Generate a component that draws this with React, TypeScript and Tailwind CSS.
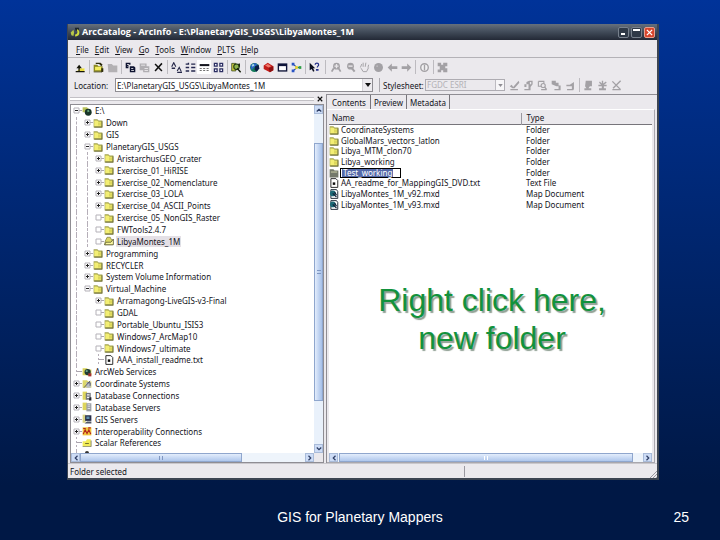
import type { ReactNode } from 'react';

type IconName =
  | 'up' | 'connect' | 'disconnect' | 'copy' | 'paste' | 'delete'
  | 'large' | 'list' | 'details' | 'thumbs' | 'search'
  | 'globe' | 'toolbox' | 'window' | 'model' | 'help'
  | 'zoomIn' | 'zoomOut' | 'pan' | 'full' | 'back' | 'forward' | 'info' | 'grid'
  | 'edit' | 'props' | 'find' | 'import' | 'export' | 'pageDown' | 'spark' | 'cross'
  | 'folder' | 'folderOpen' | 'folderDim' | 'drive' | 'text' | 'map'
  | 'web' | 'coord' | 'db' | 'server' | 'gis' | 'interop' | 'scalar';

const G = '#a3a1a5';

// all drawn on a 16 unit grid
const ICONS: Record<IconName, ReactNode> = {
  up: (
    <>
      <path d="M1 14h13V9H8z" fill="#f2e96b" />
      <path d="M1 13h13v2H1zM5 7h2v6H5zM2 9l4-5 4 5z" fill="#15150a" />
      <path d="M7 10h6v3H7z" fill="#e9dd3d" />
    </>
  ),
  connect: (
    <>
      <path d="M1 4h5l2 2h6v8H1z" fill="#8d8a22" />
      <path d="M3 7h9v5H3z" fill="#f4ee60" />
      <path d="M4 1h7l3 3-2 2-3-3H4zM12 9h3v5l-3 1z" fill="#2d2c0c" />
      <path d="M1 14h12v1H1z" fill="#2d2c0c" />
    </>
  ),
  disconnect: <path d="M1 3h6l2 2h6v10H2z" fill="#b3b1b4" />,
  copy: (
    <>
      <path d="M1 1h7v3H5v5H1zM7 6h6l2 2v7H7z" fill="#0d1230" />
      <path d="M3 3h3v1H3zM3 6h1v1H3zM9 9h3v1H9zM9 12h4v1H9z" fill="#fff" />
    </>
  ),
  paste: (
    <>
      <path d="M1 2h10v4h4v9H6v-3H1z" fill="#b0aeb2" />
      <path d="M3 4h6v1H3zM8 9h5v1H8zM8 12h5v1H8z" fill="#f6f5f7" />
    </>
  ),
  delete: <path d="M3 3l10 10M13 2L3 13" stroke="#111" strokeWidth="2.2" fill="none" />,
  large: (
    <>
      <path d="M1 7l3-6 3 6M9 13l3-5 3 6" stroke="#26284a" strokeWidth="1.6" fill="none" />
      <path d="M1 8h5v2H1zM9 14h7v2H9z" fill="#26284a" />
    </>
  ),
  list: <path d="M1 2h5v2H1zM9 2h6v2H9zM1 7h5v2H1zM9 7h6v2H9zM1 12h5v2H1zM9 12h6v2H9zM4 1h2v2H4z" fill="#24274e" />,
  details: (
    <>
      <path d="M1 3h14v3H1z" fill="#15161f" />
      <path d="M1 9h3v1H1zM6 9h3v1H6zM11 9h3v1h-3zM1 12h3v1H1zM6 12h3v1H6zM11 12h3v1h-3z" fill="#444" />
    </>
  ),
  thumbs: <path d="M2 2h4v4H2zM10 2h4v4h-4zM2 10h4v4H2zM10 10h4v4h-4z" fill="#f4f4ff" stroke="#2b2e62" strokeWidth="1.8" />,
  search: (
    <>
      <path d="M1 2h6v11H1z" fill="#c9c83f" stroke="#24380f" />
      <circle cx="8" cy="7" r="4" fill="#8fb44c" stroke="#1d3311" strokeWidth="1.5" />
      <path d="M9 9l5 6M12 2v5" stroke="#16200d" strokeWidth="2" />
    </>
  ),
  globe: (
    <>
      <circle cx="8" cy="8" r="6.5" fill="#147a5a" />
      <path d="M2 6c3-5 8-5 10-2L7 8l-3 4z" fill="#2d65c8" />
      <path d="M9 6l5-2 1 5-4 5-3-3z" fill="#0c1b45" />
      <path d="M4 4l3-1 1 2-3 2z" fill="#a9e0e2" />
    </>
  ),
  toolbox: (
    <>
      <path d="M1 5l6-4 8 5v6l-5 3-9-5z" fill="#c31d1a" />
      <path d="M3 5l4-2 5 3-4 2z" fill="#f0796c" />
      <path d="M8 9l7-3v6l-5 3z" fill="#8c1012" />
    </>
  ),
  window: (
    <>
      <path d="M1 2h14v12H1z" fill="#10153a" />
      <path d="M3 6h10v6H3z" fill="#fff" />
    </>
  ),
  model: (
    <>
      <path d="M3 3l6 5-6 5M9 8h5" stroke="#274a9c" strokeWidth="1.5" fill="none" />
      <path d="M1 1h4v4H1zM1 11h4v4H1z" fill="#2a54c4" />
      <path d="M6 6h4v4H6z" fill="#e8d72b" />
      <path d="M11 6h4v4h-4z" fill="#2c9c45" />
    </>
  ),
  help: (
    <>
      <path d="M1 1l8 8H6l2 4-2 1-2-4-3 2z" fill="#0d0f20" />
      <path d="M9 4c0-3 5-3 5 0 0 2-2 2-2 4M11 11h2v1h-2z" stroke="#25308a" strokeWidth="1.8" fill="none" />
    </>
  ),
  zoomIn: (
    <>
      <circle cx="8" cy="6" r="5" fill={G} />
      <path d="M7 3h2v2h2v2H9v2H7V7H5V5h2z" fill="#e9e7ea" />
      <path d="M4 9l-3 5M11 9l3 5" stroke={G} strokeWidth="2.5" />
    </>
  ),
  zoomOut: (
    <>
      <circle cx="8" cy="6" r="5" fill={G} />
      <path d="M5 5h6v2H5z" fill="#e9e7ea" />
      <path d="M10 9l4 5" stroke={G} strokeWidth="3" />
    </>
  ),
  pan: <path d="M2 8l2-5M6 7V1M9 7l1-6M13 8l1-4M3 9l3 5h5l3-6" stroke={G} strokeWidth="1.4" fill="none" />,
  full: (
    <>
      <circle cx="8" cy="8" r="6.5" fill={G} />
      <path d="M5 5h2v2H5z" fill="#c9c7cb" />
    </>
  ),
  back: <path d="M1 8l6-6v4h8v4H7v4z" fill={G} />,
  forward: <path d="M15 8L9 2v4H1v4h8v4z" fill={G} />,
  info: (
    <>
      <circle cx="8" cy="8" r="5.5" stroke={G} strokeWidth="2" fill="#f2f1f3" />
      <path d="M7 4h2v8H7z" fill={G} />
    </>
  ),
  grid: <path d="M1 1h5v3h3V1h6v5h-3v3h3v6H9v-3H6v3H1v-4h3V6H1z" fill={G} />,
  edit: <path d="M1 9l3-2 2 3 8-9 1 3-7 8H5zM2 13h11v2H2z" fill={G} />,
  props: <path d="M2 6h3V3l4-2h5v5l-3 4v5H2v-2h6V6H5v4H2zM10 3v3h2V3z" fill={G} />,
  find: (
    <>
      <path d="M2 2h8v3M2 2v7h4" stroke={G} strokeWidth="1.6" fill="none" />
      <circle cx="9" cy="8" r="3" stroke={G} strokeWidth="1.6" fill="none" />
      <path d="M11 10l3 4M6 14h8" stroke={G} strokeWidth="2" />
    </>
  ),
  import: <path d="M1 1h6v3h4v4h3v7H5v-2h6V9H8L1 6z" fill={G} />,
  export: <path d="M2 7h5l6-4v10l-1 2H3v-2h7V9H2z" fill={G} />,
  pageDown: <path d="M4 1h9v8h-3l-2 3h4v3H2v-3h3L3 9z" fill={G} />,
  spark: <path d="M7 1h2v4l4-3 1 2-4 3h4v2h-4v3h3v3H3v-3h4V9H2V7h4L3 4l1-2 3 3z" fill={G} />,
  cross: <path d="M2 2l12 12M14 1L3 12M2 14h12" stroke={G} strokeWidth="2" fill="none" />,
  folder: (
    <>
      <path d="M1 2h6l2 2h6v11H1z" fill="#a3a34f" />
      <path d="M2 4h5l2 2h4v7H2z" fill="#f3ee74" />
      <path d="M8 7h5v5H8z" fill="#dcd75c" />
      <path d="M14 5h1v10H2v-1h12z" fill="#5a5a2a" />
    </>
  ),
  folderOpen: (
    <>
      <path d="M2 8l3-6h5l2 4h2v8H1z" fill="#dcd866" stroke="#6b6a33" />
      <path d="M1 14h14V5l-4 5H3z" fill="#fbf7a0" stroke="#35351b" />
    </>
  ),
  folderDim: (
    <>
      <path d="M1 2h6l2 2h6v11H1z" fill="#74796a" />
      <path d="M3 5h10v3H3z" fill="#a3a68a" />
    </>
  ),
  drive: (
    <>
      <path d="M1 2h7l3 3v5H1z" fill="#b9c25a" />
      <circle cx="10" cy="10" r="5.5" fill="#183427" />
      <path d="M8 7l3-1 1 3-3 1z" fill="#66a37c" />
    </>
  ),
  text: (
    <>
      <path d="M3 1h8l3 3v11H3z" fill="#fff" stroke="#222" strokeWidth="1.5" />
      <path d="M6 7h4v4H6z" fill="#111" />
    </>
  ),
  map: (
    <>
      <path d="M3 1h9l2 3v11H3z" fill="#fff" stroke="#1c2633" strokeWidth="1.5" />
      <circle cx="6" cy="7" r="4.5" fill="#1d6a77" />
      <path d="M6 7l6 6M9 5l3 5" stroke="#122238" strokeWidth="2" />
    </>
  ),
  web: (
    <>
      <path d="M1 2h7l2 2h5v9H1z" fill="#d8d25a" />
      <circle cx="9" cy="8" r="5" fill="#1f3b35" />
      <path d="M10 10h5v5h-5z" fill="#a5302f" />
      <path d="M6 5h3v3H6z" fill="#6fa68a" />
    </>
  ),
  coord: (
    <>
      <path d="M1 2h7l2 2h5v10H1z" fill="#ddd86a" />
      <path d="M7 5h7v9H7z" fill="#b7bcc4" />
      <path d="M3 14L13 3M9 6h4v5" stroke="#54566a" strokeWidth="1.5" fill="none" />
    </>
  ),
  db: (
    <>
      <path d="M1 1h7v13H1z" fill="#ded65c" />
      <path d="M6 3h8v11H6z" fill="#777a80" />
      <path d="M8 5h4v2H8zM8 9h4v2H8z" fill="#f2f2f4" />
      <path d="M12 10h3v5h-4z" fill="#26272d" />
    </>
  ),
  server: (
    <>
      <path d="M1 1h7v12H1z" fill="#ded65c" />
      <path d="M7 2h8v13H7z" fill="#9da0a6" />
      <path d="M9 4h4v1H9zM9 7h4v1H9zM9 10h4v1H9z" fill="#f6f6f8" />
    </>
  ),
  gis: (
    <>
      <path d="M1 1h5v13H1z" fill="#d8d284" />
      <path d="M5 2h10v9H5z" fill="#262c48" />
      <path d="M7 4h5v4H7z" fill="#5f8fae" />
      <path d="M8 12h7v3H4z" fill="#525866" />
    </>
  ),
  interop: (
    <>
      <path d="M1 2h14v13H1z" fill="#f0c63c" />
      <path d="M2 13l3-7 3 6 3-6 3 7M2 4h4M10 3h4" stroke="#b3241c" strokeWidth="1.8" fill="none" />
    </>
  ),
  scalar: (
    <>
      <path d="M1 5h5l2-3h6v11H1z" fill="#f2ec58" />
      <path d="M14 4h1v10H1v-1h13zM5 8h6v1H5z" fill="#49481c" />
    </>
  ),
};

function Icon({ name, className = 'size-[11px]' }: { name: IconName; className?: string }) {
  return (
    <svg viewBox="0 0 16 16" aria-hidden="true" className={`${className} shrink-0`}>
      {ICONS[name]}
    </svg>
  );
}

function ToolButton({ name, pressed = false }: { name: IconName; pressed?: boolean }) {
  return (
    <button
      type="button"
      aria-label={name}
      aria-pressed={pressed}
      className={`flex h-[14px] w-[14px] shrink-0 items-center justify-center ${pressed ? 'bg-white' : ''}`}
    >
      <Icon name={name} />
    </button>
  );
}

function Separator({ wide = false }: { wide?: boolean }) {
  return (
    <div className={`flex shrink-0 justify-center ${wide ? 'w-2' : 'w-1'}`}>
      <div className="h-[14px] w-px bg-[#bdbbc0]" />
    </div>
  );
}

const TOOL_GROUPS: IconName[][] = [
  ['up'],
  ['connect', 'disconnect'],
  ['copy', 'paste', 'delete'],
  ['large', 'list', 'details', 'thumbs'],
  ['search'],
  ['globe', 'toolbox', 'window', 'model'],
  ['help'],
  ['zoomIn', 'zoomOut', 'pan', 'full', 'back', 'forward'],
  ['info'],
  ['grid'],
];

type Expander = 'plus' | 'minus' | 'box' | 'none';
type Node = { label: string; level: number; icon: IconName; exp: Expander; open?: boolean; selected?: boolean };

const TREE: Node[] = [
  { label: 'E:\\', level: 0, icon: 'drive', exp: 'minus' },
  { label: 'Down', level: 1, icon: 'folder', exp: 'plus' },
  { label: 'GIS', level: 1, icon: 'folder', exp: 'plus' },
  { label: 'PlanetaryGIS_USGS', level: 1, icon: 'folder', exp: 'minus' },
  { label: 'AristarchusGEO_crater', level: 2, icon: 'folder', exp: 'plus', open: true },
  { label: 'Exercise_01_HiRISE', level: 2, icon: 'folder', exp: 'plus', open: true },
  { label: 'Exercise_02_Nomenclature', level: 2, icon: 'folder', exp: 'plus', open: true },
  { label: 'Exercise_03_LOLA', level: 2, icon: 'folder', exp: 'plus', open: true },
  { label: 'Exercise_04_ASCII_Points', level: 2, icon: 'folder', exp: 'plus', open: true },
  { label: 'Exercise_05_NonGIS_Raster', level: 2, icon: 'folder', exp: 'box', open: true },
  { label: 'FWTools2.4.7', level: 2, icon: 'folder', exp: 'box', open: true },
  { label: 'LibyaMontes_1M', level: 2, icon: 'folderOpen', exp: 'box', open: true, selected: true },
  { label: 'Programming', level: 1, icon: 'folder', exp: 'plus' },
  { label: 'RECYCLER', level: 1, icon: 'folder', exp: 'plus' },
  { label: 'System Volume Information', level: 1, icon: 'folder', exp: 'plus' },
  { label: 'Virtual_Machine', level: 1, icon: 'folder', exp: 'minus' },
  { label: 'Arramagong-LiveGIS-v3-Final', level: 2, icon: 'folder', exp: 'plus' },
  { label: 'GDAL', level: 2, icon: 'folder', exp: 'box' },
  { label: 'Portable_Ubuntu_ISIS3', level: 2, icon: 'folder', exp: 'box' },
  { label: 'Windows7_ArcMap10', level: 2, icon: 'folder', exp: 'box' },
  { label: 'Windows7_ultimate', level: 2, icon: 'folder', exp: 'box' },
  { label: 'AAA_install_readme.txt', level: 2, icon: 'text', exp: 'none' },
  { label: 'ArcWeb Services', level: 0, icon: 'web', exp: 'none' },
  { label: 'Coordinate Systems', level: 0, icon: 'coord', exp: 'plus' },
  { label: 'Database Connections', level: 0, icon: 'db', exp: 'plus' },
  { label: 'Database Servers', level: 0, icon: 'server', exp: 'plus' },
  { label: 'GIS Servers', level: 0, icon: 'gis', exp: 'plus' },
  { label: 'Interoperability Connections', level: 0, icon: 'interop', exp: 'plus' },
  { label: 'Scalar References', level: 0, icon: 'scalar', exp: 'none' },
];

const FILES: { name: string; type: string; icon: IconName; editing?: boolean }[] = [
  { name: 'CoordinateSystems', type: 'Folder', icon: 'folder' },
  { name: 'GlobalMars_vectors_latlon', type: 'Folder', icon: 'folder' },
  { name: 'Libya_MTM_clon70', type: 'Folder', icon: 'folder' },
  { name: 'Libya_working', type: 'Folder', icon: 'folder' },
  { name: 'Test_working', type: 'Folder', icon: 'folderDim', editing: true },
  { name: 'AA_readme_for_MappingGIS_DVD.txt', type: 'Text File', icon: 'text' },
  { name: 'LibyaMontes_1M_v92.mxd', type: 'Map Document', icon: 'map' },
  { name: 'LibyaMontes_1M_v93.mxd', type: 'Map Document', icon: 'map' },
];

function Guide({ line }: { line: boolean }) {
  return (
    <span className="flex w-[11px] shrink-0 justify-center self-stretch">
      {line && <span className="border-l border-dashed border-[#b5aeb8]" />}
    </span>
  );
}

function ExpanderMark({ kind }: { kind: Expander }) {
  return (
    <svg viewBox="0 0 11 11" aria-hidden="true" className="size-[11px] shrink-0">
      <path d={kind === 'none' ? 'M5 5.5h6' : 'M8 5.5h3'} stroke="#aaa4ad" />
      {kind === 'none' && <path d="M5.5 0v11" stroke="#b5aeb8" strokeDasharray="2 2" />}
      {kind !== 'none' && <path d="M3 3h5v5h-5z" fill="#fff" stroke="#b4b1b8" />}
      {(kind === 'plus' || kind === 'minus') && <path d="M4 5.5h3" stroke="#222" />}
      {kind === 'plus' && <path d="M5.5 4v3" stroke="#222" />}
    </svg>
  );
}

function TreeRow({ node }: { node: Node }) {
  return (
    <li className="flex min-h-0 flex-1 items-center">
      {node.level > 0 && <Guide line />}
      {node.level > 1 && <Guide line={!!node.open} />}
      <ExpanderMark kind={node.exp} />
      <Icon name={node.icon} className="size-[10px]" />
      <span className={`ml-[2px] px-px leading-[11px] whitespace-nowrap ${node.selected ? 'bg-[#e4e0e6]' : ''}`}>
        {node.label}
      </span>
    </li>
  );
}

function ScrollArrow({ d, label }: { d: string; label: string }) {
  return (
    <button
      type="button"
      aria-label={label}
      className="flex size-[9px] shrink-0 items-center justify-center border border-[#a9bbd9] bg-[#cddcf6]"
    >
      <svg viewBox="0 0 8 8" className="size-[6px] shrink-0">
        <path d={d} fill="none" stroke="#2d3d63" strokeWidth="1.6" />
      </svg>
    </button>
  );
}

function Titlebar() {
  return (
    <header className="flex h-4 shrink-0 items-center bg-linear-to-b from-[#66707d] via-[#414b59] to-[#232936] px-[2px]">
      <svg viewBox="0 0 16 16" aria-hidden="true" className="size-[11px] shrink-0">
        <path d="M7 1h6v5L8 5z" fill="#1b232b" />
        <path d="M11 3c4 3 4 10-3 11l-1-3c3 0 5-3 3-6z" fill="#d2dc3e" />
        <path d="M1 8l4-4 1 4-1 5-3-1z" fill="#b7c64a" />
      </svg>
      <h1 className="ml-px font-['Open_Sans','Noto_Sans',sans-serif] text-[9px] leading-3 font-bold whitespace-nowrap text-white">
        ArcCatalog - ArcInfo - E:\PlanetaryGIS_USGS\LibyaMontes_1M
      </h1>
      <div className="ml-auto flex gap-[2px]">
        <button type="button" aria-label="Minimize" className="flex size-[11px] items-end rounded-[2px] border border-[#77808c] bg-[#2f3947] p-[2px]">
          <span className="h-[2px] w-1 bg-white" />
        </button>
        <button type="button" aria-label="Maximize" className="flex size-[11px] items-start rounded-[2px] border border-[#77808c] bg-[#2f3947] p-px">
          <span className="h-[2px] w-full bg-white" />
        </button>
        <button type="button" aria-label="Close" className="flex size-[11px] items-center justify-center rounded-[2px] border border-[#e9a08e] bg-[#d8452c]">
          <svg viewBox="0 0 8 8" className="size-[7px]">
            <path d="M1 1l6 6M7 1L1 7" stroke="#fff" strokeWidth="1.5" />
          </svg>
        </button>
      </div>
    </header>
  );
}

const MENUS = ['File', 'Edit', 'View', 'Go', 'Tools', 'Window', 'PLTS', 'Help'];

function MenuBar() {
  return (
    <nav className="flex h-[18px] shrink-0 items-center gap-[6px] border-b border-[#b4b2b7] pt-[2px] pl-2">
      {MENUS.map((item) => (
        <button key={item} type="button" className="leading-[11px]">
          <u>{item[0]}</u>{item.slice(1)}
        </button>
      ))}
    </nav>
  );
}

function LocationBar() {
  return (
    <div className="flex h-[18px] shrink-0 items-center pl-[6px]">
      <label htmlFor="location" className="w-[41px] shrink-0 leading-[11px]">Location:</label>
      <div className="flex h-[14px] w-[258px] min-w-0 items-center border border-[#8f8d93] bg-white">
        <input id="location" defaultValue="E:\PlanetaryGIS_USGS\LibyaMontes_1M" className="min-w-0 flex-1 pl-px leading-[11px] outline-none" />
        <button type="button" aria-label="Show locations" className="flex h-full w-[10px] items-center justify-center border-l border-[#d5d3d8] bg-[#edebef]">
          <svg viewBox="0 0 6 4" className="h-1 w-[6px]"><path d="M0 0h6L3 4z" fill="#111" /></svg>
        </button>
      </div>
      <div className="mr-[3px] ml-[6px] h-[14px] w-px shrink-0 bg-[#aaa8ae]" />
      <label htmlFor="stylesheet" className="w-[42px] shrink-0 leading-[11px]">Stylesheet:</label>
      <div className="relative h-3 w-[80px] shrink-0 border border-[#aeacb2]">
        <select id="stylesheet" disabled className="block h-full w-full appearance-none pl-px leading-[10px] text-[#b3b1b6] opacity-100">
          <option>FGDC ESRI</option>
        </select>
        <span className="pointer-events-none absolute inset-y-0 right-0 flex w-[9px] items-center justify-center border-l border-[#bdbbc1] bg-[#f7f6f8]">
          <svg viewBox="0 0 6 4" className="h-[3px] w-[5px]"><path d="M0 0h6L3 4z" fill="#8f8d93" /></svg>
        </span>
      </div>
      <div className="ml-[2px] flex items-center">
        {(['edit', 'props', 'find', 'import', 'export'] as IconName[]).map((n) => <ToolButton key={n} name={n} />)}
        <Separator />
        {(['pageDown', 'spark', 'cross'] as IconName[]).map((n) => <ToolButton key={n} name={n} />)}
      </div>
    </div>
  );
}

function CatalogTree() {
  return (
    <section className="flex w-[258px] shrink-0 flex-col px-[2px]">
      <div className="flex h-[10px] shrink-0 items-center gap-px">
        <div className="h-1 flex-1 border-y border-[#c2c0c5] bg-white" />
        <button type="button" aria-label="Close tree" className="flex size-[9px] items-center justify-center">
          <svg viewBox="0 0 8 8" className="size-[6px]"><path d="M1 1l6 6M7 1L1 7" stroke="#111" strokeWidth="1.5" /></svg>
        </button>
      </div>
      <div className="flex min-h-0 flex-1 flex-col border border-[#8f8d93] bg-white">
        <div className="flex min-h-0 flex-1">
          <div className="flex min-w-0 flex-1 flex-col overflow-hidden">
            <ul className="flex min-h-0 flex-1 flex-col">
              {TREE.map((node) => <TreeRow key={node.label} node={node} />)}
            </ul>
            {/* top edge of the next, scrolled-off entry */}
            <div className="flex h-1 shrink-0 items-end">
              <Guide line />
              <span className="ml-[3px] h-[2px] w-1 rounded-t bg-[#333]" />
            </div>
          </div>
          <div className="flex w-[9px] shrink-0 flex-col bg-[#e9f1fb]">
            <ScrollArrow d="M1 6l3-3 3 3" label="Scroll up" />
            <div className="h-[29px]" />
            <div className="flex flex-1 items-center justify-center border border-[#8fa6cd] bg-linear-to-r from-[#e3edfc] to-[#a5bfe8]">
              <span className="h-1 w-1 border-y border-[#7f97c2]" />
            </div>
            <div className="h-[43px]" />
            <ScrollArrow d="M1 2l3 3 3-3" label="Scroll down" />
          </div>
        </div>
        <div className="flex h-[9px] shrink-0 bg-[#eef4fb]">
          <ScrollArrow d="M6 1L3 4l3 3" label="Scroll left" />
          <div className="flex w-[162px] items-center justify-center border border-[#8fa6cd] bg-linear-to-b from-[#e3edfc] to-[#afc7ec]">
            <span className="h-1 w-1 border-x border-[#7f97c2]" />
          </div>
          <div className="flex-1" />
          <ScrollArrow d="M2 1l3 3-3 3" label="Scroll right" />
          <div className="w-[9px] bg-[#ebe9ed]" />
        </div>
      </div>
    </section>
  );
}

function ContentsPane() {
  return (
    <section className="flex min-w-0 flex-1 flex-col border-t border-l border-[#8f8d93] pr-[2px]">
      <div role="tablist" className="flex h-[14px] shrink-0 items-stretch pl-px">
        <button type="button" role="tab" aria-selected="true" className="border-r border-[#77757b] px-1 leading-[11px]">Contents</button>
        <button type="button" role="tab" aria-selected="false" className="border-r border-[#77757b] px-[3px] pt-px leading-[11px]">Preview</button>
        <button type="button" role="tab" aria-selected="false" className="border-r border-[#77757b] px-[3px] pt-px leading-[11px]">Metadata</button>
      </div>
      <div className="flex min-h-0 flex-1 flex-col border-t border-r border-b border-t-white border-r-[#a9a7ad] border-b-[#a9a7ad] px-[2px] pt-[3px]">
        <div className="flex min-h-0 flex-1 flex-col bg-white">
          <table className="h-[97px] w-full table-fixed border-collapse">
            <thead>
              <tr className="h-[11px] border-b border-[#77757b] bg-[#ebe9ed] text-left">
                <th className="w-[192px] border-r border-[#9a98a0] py-0 pl-[3px] leading-[10px] font-normal">Name</th>
                <th className="py-0 pl-[5px] leading-[10px] font-normal">Type</th>
              </tr>
            </thead>
            <tbody>
              {FILES.map((f) => (
                <tr key={f.name}>
                  <td className="p-0">
                    <div className="flex h-[10px] items-center gap-px">
                      <Icon name={f.icon} className="size-[10px]" />
                      {f.editing ? (
                        <span className="flex h-[10px] w-[61px] items-center border border-black bg-white">
                          <span className="ml-px bg-[#5469a8] px-px leading-[8px] text-white">{f.name}</span>
                        </span>
                      ) : (
                        <span className="pl-px leading-[10px] whitespace-nowrap">{f.name}</span>
                      )}
                    </div>
                  </td>
                  <td className="p-0 pl-[5px] leading-[10px]">{f.type}</td>
                </tr>
              ))}
            </tbody>
          </table>
          <p className="mt-[71px] flex-1 pl-[3px] text-center font-['Liberation_Sans',Arial,sans-serif] text-[32px] leading-[38px] text-[#12923c] [text-shadow:2px_2px_1px_#8f9f93]">
            Right click here,<br />new folder
          </p>
          <div className="flex h-[9px] shrink-0 bg-[#eef4fb]">
            <ScrollArrow d="M6 1L3 4l3 3" label="Scroll left" />
            <div className="ml-px flex flex-1 items-center justify-center border border-[#8fa6cd] bg-linear-to-b from-[#e3edfc] to-[#afc7ec]">
              <span className="h-1 w-1 border-x border-white" />
            </div>
            <div className="w-[10px]" />
            <ScrollArrow d="M2 1l3 3-3 3" label="Scroll right" />
          </div>
        </div>
      </div>
    </section>
  );
}

export default function App() {
  return (
    <div className="flex h-screen min-h-[540px] flex-col bg-linear-to-b from-[#003399] to-[#001845] to-90% font-['Liberation_Sans',Arial,sans-serif]">
      <main className="mt-6 mr-[61px] ml-[67px] flex min-h-0 flex-1 flex-col border-r-2 border-b-2 border-l border-[#3d4552] bg-[#ebe9ed] font-['Noto_Sans','Open_Sans',sans-serif] text-[8px] text-[#14141c]">
        <Titlebar />
        <MenuBar />
        <div className="flex h-[18px] shrink-0 items-center pl-[5px]">
          {TOOL_GROUPS.map((group, i) => (
            <div key={group[0]} className="flex items-center">
              {i > 0 && <Separator wide={group[0] === 'zoomIn'} />}
              {group.map((name) => <ToolButton key={name} name={name} pressed={name === 'details'} />)}
            </div>
          ))}
        </div>
        <LocationBar />
        <div className="flex min-h-0 flex-1">
          <CatalogTree />
          <ContentsPane />
        </div>
        <footer className="flex h-[15px] shrink-0 items-center border-t border-[#c9c7cc] pl-[2px]">
          <span className="leading-[11px]">Folder selected</span>
          <div className="mr-[184px] ml-auto h-[11px] w-px bg-[#9a98a0]" />
          <svg viewBox="0 0 8 8" aria-hidden="true" className="size-2 self-end">
            <path d="M1 8l7-7M4 8l4-4M7 8l1-1" stroke="#9a98a0" />
          </svg>
        </footer>
      </main>
      <footer className="grid h-[60px] shrink-0 grid-cols-3 pt-7 text-[14px] leading-[18px] text-white">
        <span className="col-start-2 text-center">GIS for Planetary Mappers</span>
        <span className="pr-[31px] text-right">25</span>
      </footer>
    </div>
  );
}
